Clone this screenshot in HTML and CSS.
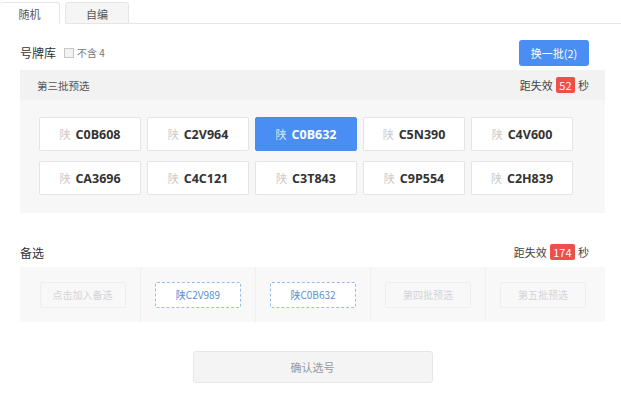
FILE: index.html
```html
<!DOCTYPE html>
<html lang="zh-CN">
<head>
    <meta charset="UTF-8">
    <title>选号</title>
    <link rel="stylesheet" href="styles.css">
</head>
<body>
    <div class="tabs">
        <div class="tab active">随机</div>
        <div class="tab">自编</div>
        <div class="tab-rest"></div>
    </div>

    <div class="main">
        <div class="toolbar">
            <span class="label">号牌库</span>
            <label class="check"><span class="box"></span>不含 4</label>
            <button class="swap-btn">换一批(2)</button>
        </div>

        <div class="pool">
            <div class="pool-head">
                <span>第三批预选</span>
                <span class="timer">距失效 <em class="badge">52</em> 秒</span>
            </div>
            <div class="plates">
                <div class="plate"><i>陕</i> C0B608</div>
                <div class="plate"><i>陕</i> C2V964</div>
                <div class="plate selected"><i>陕</i> C0B632</div>
                <div class="plate"><i>陕</i> C5N390</div>
                <div class="plate"><i>陕</i> C4V600</div>
                <div class="plate"><i>陕</i> CA3696</div>
                <div class="plate"><i>陕</i> C4C121</div>
                <div class="plate"><i>陕</i> C3T843</div>
                <div class="plate"><i>陕</i> C9P554</div>
                <div class="plate"><i>陕</i> C2H839</div>
            </div>
        </div>

        <div class="backup-head">
            <span class="label">备选</span>
            <span class="timer">距失效 <em class="badge">174</em> 秒</span>
        </div>
        <div class="backup">
            <div class="slot"><span class="slot-btn empty">点击加入备选</span></div>
            <div class="slot"><span class="slot-btn filled">陕C2V989</span></div>
            <div class="slot"><span class="slot-btn filled">陕C0B632</span></div>
            <div class="slot"><span class="slot-btn empty">第四批预选</span></div>
            <div class="slot"><span class="slot-btn empty">第五批预选</span></div>
        </div>

        <div class="confirm-row">
            <button class="confirm-btn">确认选号</button>
        </div>
    </div>
</body>
</html>
```

FILE: styles.css
```css
body {
    margin: 0;
    background: #fff;
    font-family: "Noto Sans CJK SC", "Noto Sans", sans-serif;
    color: #333;
    font-size: 12px;
}

.tabs {
    display: flex;
    align-items: flex-end;
    height: 24px;
}

.tab {
    height: 22px;
    line-height: 22px;
    text-align: center;
    font-size: 11px;
    color: #555;
    box-sizing: border-box;
    border: 1px solid #e6e6e6;
    border-radius: 3px 3px 0 0;
}

.tab.active {
    width: 60px;
    background: #fff;
    border-left: none;
    border-bottom-color: #fff;
}

.tab:not(.active) {
    width: 64px;
    margin-left: 5px;
    background: #f5f5f5;
}

.tab-rest {
    flex: 1;
    border-bottom: 1px solid #e6e6e6;
}

.main {
    padding: 0 16px 0 20px;
}

.toolbar {
    display: flex;
    align-items: center;
    height: 44px;
    padding-top: 13px;
    box-sizing: border-box;
}

.label {
    font-size: 12px;
    color: #333;
}

.check {
    display: flex;
    align-items: center;
    margin-left: 8px;
    font-size: 10px;
    color: #777;
}

.box {
    width: 8px;
    height: 8px;
    border: 1px solid #c8c8c8;
    background: #f2f2f2;
    margin-right: 3px;
}

.swap-btn {
    margin-left: auto;
    margin-right: 16px;
    width: 70px;
    height: 26px;
    border: none;
    border-radius: 3px;
    background: #4a8ef3;
    color: #fff;
    font-family: inherit;
    font-size: 11px;
    padding: 0;
}

.pool {
    margin-top: 2px;
    background: #f7f7f8;
    padding-bottom: 18px;
}

.pool-head, .backup-head {
    display: flex;
    justify-content: space-between;
    align-items: center;
    height: 30px;
}

.pool-head {
    background: #f2f2f3;
    padding: 0 16px 0 17px;
    font-size: 10.5px;
    color: #555;
}

.timer {
    font-size: 11px;
    color: #444;
}

.badge {
    display: inline-block;
    font-style: normal;
    background: #ee4f4b;
    color: #fff;
    padding: 0 3px;
    height: 16px;
    line-height: 16px;
    border-radius: 2px;
    margin: 0 1px;
    font-size: 11px;
}

.plates {
    display: grid;
    grid-template-columns: repeat(5, 102px);
    column-gap: 6px;
    row-gap: 10px;
    padding: 17px 0 0 19px;
}

.plate {
    height: 34px;
    box-sizing: border-box;
    background: #fff;
    border: 1px solid #e4e4e4;
    border-radius: 2px;
    display: flex;
    align-items: center;
    justify-content: center;
    font-family: "Open Sans", sans-serif;
    font-weight: 700;
    font-size: 12.5px;
    color: #333;
}

.plate i {
    font-style: normal;
    font-weight: 400;
    color: #ccc;
    font-family: "Noto Sans CJK SC", sans-serif;
    font-size: 11px;
    margin-right: 5px;
}

.plate.selected {
    background: #4a8ef3;
    border-color: #4a8ef3;
    color: #fff;
}

.plate.selected i {
    color: #d5e4fb;
}

.backup-head {
    margin-top: 24px;
    padding-right: 16px;
}

.backup {
    display: grid;
    grid-template-columns: repeat(5, 1fr);
    height: 55px;
    padding: 0 5px;
    background: #f8f8f9;
}

.slot {
    display: flex;
    align-items: center;
    justify-content: center;
    border-left: 1px solid #efeff0;
}

.slot:first-child {
    border-left: none;
}

.slot-btn {
    width: 86px;
    height: 26px;
    box-sizing: border-box;
    display: flex;
    align-items: center;
    justify-content: center;
    font-size: 10px;
    border-radius: 2px;
}

.slot-btn.empty {
    border: 1px solid #eeeeef;
    color: #d4d4d6;
}

.slot-btn.filled {
    background: #fff;
    border: 1px dashed #9bbce9;
    color: #5b8fd8;
}

.confirm-row {
    display: flex;
    justify-content: center;
    padding-top: 29px;
}

.confirm-btn {
    width: 240px;
    height: 32px;
    background: #f4f4f5;
    border: 1px solid #e6e6e7;
    border-radius: 3px;
    color: #999;
    font-family: inherit;
    font-size: 11px;
}
```
